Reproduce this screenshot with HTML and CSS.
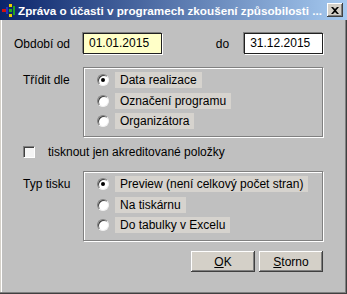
FILE: index.html
```html
<!DOCTYPE html>
<html lang="cs">
<head>
  <meta charset="UTF-8">
  <title>Zpráva o účasti v programech zkoušení způsobilosti</title>
  <link rel="stylesheet" href="styles.css">
</head>
<body>
  <div class="window">
    <!-- Title bar -->
    <div class="titlebar">
      <svg class="app-icon" width="16" height="16" viewBox="0 0 16 16">
        <rect x="1" y="7" width="4" height="3" fill="#d01010"/>
        <rect x="5" y="5" width="2" height="7" fill="#2030c0"/>
        <rect x="8" y="2" width="3" height="3" fill="#e8d000"/>
        <rect x="8" y="7" width="3" height="3" fill="#20b020"/>
        <rect x="8" y="12" width="3" height="3" fill="#e8d000"/>
        <rect x="12" y="4" width="2" height="9" fill="#20a020"/>
      </svg>
      <span class="title">Zpráva o účasti v programech zkoušení způsobilosti ...</span>
      <span class="close-btn">
        <svg width="8" height="7" viewBox="0 0 8 7">
          <path d="M0 0h2l2 2 2-2h2L5 3.5 8 7H6L4 5 2 7H0l3-3.5z" fill="#000"/>
        </svg>
      </span>
    </div>

    <div class="content">
      <!-- Period -->
      <div class="row period">
        <span class="label">Období od</span>
        <div class="field from">01.01.2015</div>
        <span class="to-label">do</span>
        <div class="field">31.12.2015</div>
      </div>

      <!-- Sorting -->
      <div class="row group-row sort">
        <span class="label indent">Třídit dle</span>
        <div class="group">
          <div class="option"><span class="radio checked"></span><span class="opt-text">Data realizace</span></div>
          <div class="option"><span class="radio"></span><span class="opt-text">Označení programu</span></div>
          <div class="option"><span class="radio"></span><span class="opt-text">Organizátora</span></div>
        </div>
      </div>

      <!-- Checkbox -->
      <div class="check-row">
        <span class="checkbox"></span>
        <span>tisknout jen akreditované položky</span>
      </div>

      <!-- Print type -->
      <div class="row group-row print">
        <span class="label indent">Typ tisku</span>
        <div class="group">
          <div class="option"><span class="radio checked"></span><span class="opt-text">Preview (není celkový počet stran)</span></div>
          <div class="option"><span class="radio"></span><span class="opt-text">Na tiskárnu</span></div>
          <div class="option"><span class="radio"></span><span class="opt-text">Do tabulky v Excelu</span></div>
        </div>
      </div>

      <!-- Buttons -->
      <div class="buttons">
        <button class="btn"><u>O</u>K</button>
        <button class="btn"><u>S</u>torno</button>
      </div>
    </div>
  </div>
</body>
</html>
```

FILE: styles.css
```css
body {
  margin: 0;
  padding: 0;
  font-family: "Liberation Sans", Arial, sans-serif;
  font-size: 12px;
  color: #000;
  background: #c0c0c0;
}

.window {
  width: 347px;
  height: 294px;
  box-sizing: border-box;
  background: #c0c0c0;
  box-shadow: inset -1px -1px 0 #404040, inset -2px -2px 0 #808080,
              inset 1px 1px 0 #d4d0c8, inset 2px 2px 0 #ffffff;
}

/* Title bar */
.titlebar {
  height: 20px;
  display: flex;
  align-items: center;
  padding: 0 4px 0 1px;
  background: linear-gradient(to right, #0a246a, #a6caf0);
  color: white;
}

.app-icon {
  flex: none;
  margin-right: 1px;
}

.title {
  flex: none;
  margin-right: auto;
  font-weight: bold;
  font-size: 11.7px;
  white-space: nowrap;
}

.close-btn {
  width: 16px;
  height: 14px;
  flex: none;
  box-sizing: border-box;
  display: flex;
  align-items: center;
  justify-content: center;
  background: #d4d0c8;
  box-shadow: inset -1px -1px 0 #404040, inset 1px 1px 0 #ffffff, inset -2px -2px 0 #808080;
}

/* Content */
.content {
  padding: 13px 24px 0 14px;
}

.row {
  display: flex;
}

.label {
  width: 69px;
  flex: none;
  box-sizing: border-box;
}

.label.indent {
  padding-left: 9px;
}

.period {
  align-items: center;
  height: 21px;
}

.field {
  width: 80px;
  height: 21px;
  box-sizing: border-box;
  padding-left: 5px;
  line-height: 19px;
  background: #ffffff;
  border: 1px solid #202020;
  box-shadow: 1px 1px 0 #ffffff, -1px -1px 0 #808080;
}

.field.from {
  background: #ffffc8;
}

.to-label {
  margin: 0 15px 0 54px;
}

/* Group boxes */
.group-row {
  margin-top: 13px;
}

.group-row .label {
  padding-top: 3px;
  line-height: 20px;
}

.group {
  flex: 1;
  height: 70px;
  box-sizing: border-box;
  padding: 2px 0 0 13px;
  border: 1px solid #808080;
  box-shadow: inset 1px 1px 0 #ffffff, 1px 1px 0 #ffffff;
}

.option {
  display: flex;
  align-items: center;
  height: 20.5px;
}

.radio {
  width: 12px;
  height: 12px;
  flex: none;
  box-sizing: border-box;
  margin-right: 6px;
  border-radius: 50%;
  background: #ffffff;
  border: 1px solid;
  border-color: #808080 #f0f0f0 #f0f0f0 #808080;
  box-shadow: inset 1px 1px 0 #404040;
  display: flex;
  align-items: center;
  justify-content: center;
}

.radio.checked::after {
  content: "";
  width: 4px;
  height: 4px;
  border-radius: 50%;
  background: #000;
}

.opt-text {
  padding: 0 5px;
  line-height: 16px;
  background: #d6d3ce;
}

/* Checkbox */
.check-row {
  display: flex;
  align-items: center;
  height: 14px;
  margin-top: 8px;
  padding-left: 9px;
}

.checkbox {
  width: 12px;
  height: 12px;
  box-sizing: border-box;
  margin-right: 13px;
  background: #f4f4f4;
  border: 1px solid;
  border-color: #808080 #ffffff #ffffff #808080;
  box-shadow: inset 1px 1px 0 #404040;
}

.print {
  margin-top: 12px;
}

/* Buttons */
.buttons {
  display: flex;
  justify-content: flex-end;
  gap: 4px;
  margin-top: 10px;
}

.btn {
  width: 64px;
  height: 21px;
  padding: 0;
  font-family: "Liberation Sans", Arial, sans-serif;
  font-size: 12px;
  color: #000;
  background: #d4d0c8;
  border: none;
  box-shadow: inset -1px -1px 0 #404040, inset 1px 1px 0 #ffffff, inset -2px -2px 0 #808080;
}
```
